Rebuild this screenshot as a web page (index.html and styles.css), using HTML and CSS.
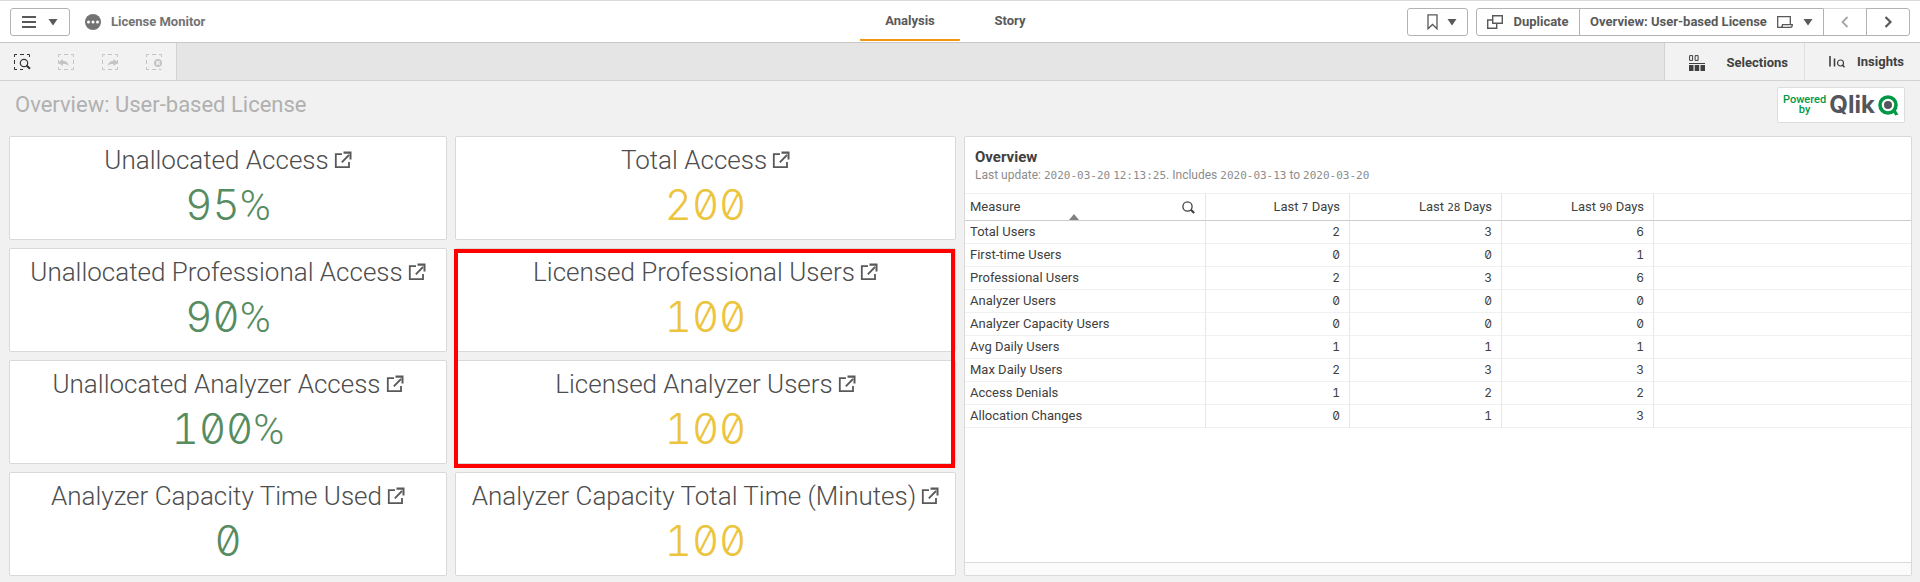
FILE: index.html
```html
<!DOCTYPE html>
<html lang="en">
<head>
<meta charset="utf-8">
<title>License Monitor</title>
<link rel="stylesheet" href="styles.css">
</head>
<body>
<svg class="defs" aria-hidden="true">
  <symbol id="external" viewBox="0 0 18 18"><path d="M8 3.2H1.8v13H15V11M7.800 11.400 15 4" fill="none" stroke="currentColor" stroke-width="1.8"/><path d="M9.500 0.500H17.500V8.500H15.500V2.700H9.500z" fill="currentColor"/></symbol>
  <symbol id="frame" viewBox="0 0 16 16"><path d="M.5 3V.5H3M6 .5h4M13 .5h2.500V3M.5 6v4M.5 13v2.500H3M6 15.500h4M13 15.500h2.500V13M15.500 6v4" fill="none" stroke="currentColor"/></symbol>
  <symbol id="caret" viewBox="0 0 10 8"><path d="M.5 1h9L5 7.500z" fill="currentColor"/></symbol>
</svg>

<header class="topbar">
  <div class="topbar-left">
    <button class="btn menu-btn" type="button" aria-label="Menu">
      <svg width="14" height="12" viewBox="0 0 14 12"><path d="M0 1h14M0 6h14M0 11h14" stroke="currentColor" stroke-width="2"/></svg>
      <svg width="10" height="8"><use href="#caret"/></svg>
    </button>
    <svg class="app-icon" width="16" height="16" viewBox="0 0 16 16"><circle cx="8" cy="8" r="8" fill="#737373"/><g fill="#fff"><circle cx="3.500" cy="8" r="1.500"/><circle cx="8" cy="8" r="1.500"/><circle cx="12.500" cy="8" r="1.500"/></g></svg>
    <span class="app-name">License Monitor</span>
  </div>
  <nav class="tabs">
    <a class="tab tab-active" href="#analysis">Analysis</a>
    <a class="tab" href="#story">Story</a>
  </nav>
  <div class="topbar-right">
    <button class="btn bookmark-btn" type="button" aria-label="Bookmarks">
      <svg width="11" height="16" viewBox="0 0 11 16"><path d="M1 .8h9v14L5.500 10.500 1 14.800z" fill="none" stroke="currentColor" stroke-width="1.300"/></svg>
      <svg width="10" height="8"><use href="#caret"/></svg>
    </button>
    <div class="btn-group">
      <button class="btn duplicate-btn" type="button">
        <svg width="16" height="14" viewBox="0 0 16 14"><path d="M5.700.7h9.600v7.600H5.700zM5.700 5H.7v8.300h9V8.300" fill="none" stroke="currentColor" stroke-width="1.400"/></svg>
        Duplicate
      </button>
      <button class="btn sheet-btn" type="button">
        Overview: User-based License
        <svg width="16" height="12" viewBox="0 0 16 12"><path d="M13.300 8.500V.7H.7v10.600h12.600c1.200 0 2-1 2-2.600H5.500c0 1.600-.8 2.600-2.200 2.600" fill="none" stroke="currentColor" stroke-width="1.300"/></svg>
        <svg width="10" height="8"><use href="#caret"/></svg>
      </button>
      <button class="btn step-btn step-off" type="button" aria-label="Previous sheet"><svg width="8" height="12" viewBox="0 0 8 12"><path d="M6.500 1 1.500 6l5 5" fill="none" stroke="currentColor" stroke-width="1.800"/></svg></button>
      <button class="btn step-btn" type="button" aria-label="Next sheet"><svg width="8" height="12" viewBox="0 0 8 12"><path d="m1.500 1 5 5-5 5" fill="none" stroke="currentColor" stroke-width="2.200"/></svg></button>
    </div>
  </div>
</header>

<div class="selections">
  <div class="tools">
    <button class="tool tool-on" type="button" aria-label="Smart search"><svg width="17" height="16" viewBox="0 0 17 16"><path d="M.5 3V.5H3M6 .5h4M13 .5h2.500V3M.5 6v4M.5 13v2.500H3M6 15.500h3" fill="none" stroke="currentColor"/><circle cx="10" cy="9" r="3.700" fill="none" stroke="currentColor" stroke-width="1.200"/><path d="m12.500 11.500 3.500 3.300" stroke="currentColor" stroke-width="2"/></svg></button>
    <button class="tool" type="button" aria-label="Step back"><svg width="17" height="16" viewBox="0 0 17 16"><use href="#frame" width="16" height="16"/><path d="M0 8.500 5 5v2c3.500 0 5.200 1.500 5.500 5C9.200 10.300 8 10 5 10v2z" fill="currentColor"/></svg></button>
    <button class="tool" type="button" aria-label="Step forward"><svg width="17" height="16" viewBox="0 0 17 16"><use href="#frame" width="16" height="16"/><path d="M16.500 8.500 11.500 5v2C8 7 6.300 8.500 6 12c1.300-1.700 2.500-2 5.500-2v2z" fill="currentColor"/></svg></button>
    <button class="tool" type="button" aria-label="Clear all selections"><svg width="17" height="16" viewBox="0 0 17 16"><path d="M.5 3V.5H3M6 .5h4M13 .5h2.500V3M.5 6v4M.5 13v2.500H3M6 15.500h4M13 15.500h2.500" fill="none" stroke="currentColor"/><circle cx="12" cy="9" r="4" fill="currentColor"/><path d="m10.300 7.300 3.400 3.400M13.700 7.300l-3.400 3.400" stroke="#f2f2f2" stroke-width="1.500"/></svg></button>
  </div>
  <div class="panels">
    <button class="panel-btn selections-btn" type="button">
      <svg width="16" height="16" viewBox="0 0 16 16"><path d="M.6.600h3v4.800h-3zM6.100.600h3v4.800h-3z" fill="none" stroke="currentColor"/><path d="M0 8h16v1H0zM0 10h4.500v6H0zM5.700 10h4.500v6H5.700zM11.500 10H16v6h-4.500z" fill="currentColor"/></svg>
      Selections
    </button>
    <button class="panel-btn insights-btn" type="button">
      <svg width="16" height="12" viewBox="0 0 16 12"><path d="M1 0v10.500M5.500 2.500v8" stroke="currentColor" stroke-width="1.600"/><circle cx="11.500" cy="7" r="3" fill="none" stroke="currentColor" stroke-width="1.200"/><path d="m13.500 9 2 2.300" stroke="currentColor" stroke-width="1.600"/></svg>
      Insights
    </button>
  </div>
</div>

<main class="sheet">
  <div class="sheet-head">
    <h1 class="sheet-title">Overview: User-based License</h1>
    <a class="powered" href="#qlik">
      <span class="powered-text">Powered<br>by</span>
      <span class="wordmark">Qlik</span>
      <svg width="21" height="21" viewBox="0 0 21 21"><circle cx="10" cy="10" r="8" fill="none" stroke="#009845" stroke-width="3.600"/><circle cx="10" cy="10" r="4" fill="#54565b"/><path d="m14 15.500 2.500-2.500 3.800 6.500-3 1z" fill="#009845"/></svg>
    </a>
  </div>

  <div class="grid">
    <section class="card green"><h2 class="kpi-title"><a href="#a">Unallocated Access<svg><use href="#external"/></svg></a></h2><div class="kpi">95<span class="unit">%</span></div></section>
    <section class="card gold"><h2 class="kpi-title"><a href="#b">Total Access<svg><use href="#external"/></svg></a></h2><div class="kpi">200</div></section>
    <section class="card green"><h2 class="kpi-title"><a href="#c">Unallocated Professional Access<svg><use href="#external"/></svg></a></h2><div class="kpi">90<span class="unit">%</span></div></section>
    <section class="card gold"><h2 class="kpi-title"><a href="#d">Licensed Professional Users<svg><use href="#external"/></svg></a></h2><div class="kpi">100</div></section>
    <section class="card green"><h2 class="kpi-title"><a href="#e">Unallocated Analyzer Access<svg><use href="#external"/></svg></a></h2><div class="kpi">100<span class="unit">%</span></div></section>
    <section class="card gold"><h2 class="kpi-title"><a href="#f">Licensed Analyzer Users<svg><use href="#external"/></svg></a></h2><div class="kpi">100</div></section>
    <section class="card green"><h2 class="kpi-title"><a href="#g">Analyzer Capacity Time Used<svg><use href="#external"/></svg></a></h2><div class="kpi">0</div></section>
    <section class="card gold"><h2 class="kpi-title"><a href="#h">Analyzer Capacity Total Time (Minutes)<svg><use href="#external"/></svg></a></h2><div class="kpi">100</div></section>
    <div class="highlight"></div>

    <section class="card overview">
      <h2 class="overview-title">Overview</h2>
      <p class="overview-sub">Last update: <span class="num">2020-03-20</span> <span class="num">12:13:25</span>. Includes <span class="num">2020-03-13</span> to <span class="num">2020-03-20</span></p>
      <table class="table">
        <colgroup><col class="c-measure"><col class="c-7"><col class="c-28"><col class="c-90"><col></colgroup>
        <thead>
          <tr>
            <th class="measure" scope="col"><div class="measure-head">Measure<button class="search" type="button" aria-label="Search Measure"><svg width="13" height="13" viewBox="0 0 13 13"><circle cx="5.500" cy="5.500" r="4.600" fill="none" stroke="currentColor" stroke-width="1.300"/><path d="m8.800 8.800 3.400 3.200" stroke="currentColor" stroke-width="2.200"/></svg></button></div><span class="sort"></span></th>
            <th scope="col">Last <span class="num">7</span> Days</th>
            <th scope="col">Last <span class="num">28</span> Days</th>
            <th scope="col">Last <span class="num">90</span> Days</th>
            <td></td>
          </tr>
        </thead>
        <tbody>
          <tr><td>Total Users</td><td>2</td><td>3</td><td>6</td><td></td></tr>
          <tr><td>First-time Users</td><td>0</td><td>0</td><td>1</td><td></td></tr>
          <tr><td>Professional Users</td><td>2</td><td>3</td><td>6</td><td></td></tr>
          <tr><td>Analyzer Users</td><td>0</td><td>0</td><td>0</td><td></td></tr>
          <tr><td>Analyzer Capacity Users</td><td>0</td><td>0</td><td>0</td><td></td></tr>
          <tr><td>Avg Daily Users</td><td>1</td><td>1</td><td>1</td><td></td></tr>
          <tr><td>Max Daily Users</td><td>2</td><td>3</td><td>3</td><td></td></tr>
          <tr><td>Access Denials</td><td>1</td><td>2</td><td>2</td><td></td></tr>
          <tr><td>Allocation Changes</td><td>0</td><td>1</td><td>3</td><td></td></tr>
        </tbody>
      </table>
      <div class="table-foot"></div>
    </section>
  </div>
</main>
</body>
</html>
```
FILE: styles.css
```css
* { box-sizing: border-box; }

body {
  margin: 0;
  min-height: 100vh;
  display: flex;
  flex-direction: column;
  background: #f1f1f1;
  color: #404040;
  font-family: Roboto, "Liberation Sans", sans-serif;
  font-size: 13px;
}

h1, h2, p { margin: 0; font-weight: 400; }
a { color: inherit; text-decoration: none; }
button { font: inherit; color: inherit; margin: 0; padding: 0; border: 0; background: none; }
svg { display: block; flex: none; }
.defs { position: absolute; width: 0; height: 0; }

.num { font-family: "DejaVu Sans Mono", monospace; font-size: 11px; line-height: 1; }
.kpi,
.table tbody td + td {
  font-family: Inter, Roboto, sans-serif;
  font-feature-settings: "tnum", "zero";
}

/* Top bar */
.topbar {
  display: grid;
  grid-template-columns: 1fr auto 1fr;
  align-items: center;
  height: 43px;
  padding: 0 10px;
  background: #fff;
  border-top: 1px solid #d9d9de;
  border-bottom: 1px solid #c8c8c8;
  color: #595959;
  font-weight: 700;
}
.topbar-left, .topbar-right { display: flex; align-items: center; }
.topbar-right { justify-content: flex-end; gap: 8px; }
.btn {
  display: flex;
  align-items: center;
  justify-content: center;
  height: 28px;
  background: #fff;
  border: 1px solid #b3b3b3;
  border-radius: 3px;
  white-space: nowrap;
}
.menu-btn { width: 60px; gap: 12px; }
.app-icon { margin: 0 10px 0 15px; }
.app-name { color: #737373; }
.bookmark-btn { width: 61px; gap: 9px; padding-left: 8px; }
.btn-group { display: flex; }
.btn-group .btn { margin-left: -1px; border-radius: 0; }
.btn-group .btn:first-child { margin-left: 0; border-radius: 3px 0 0 3px; }
.btn-group .btn:last-child { border-radius: 0 3px 3px 0; }
.duplicate-btn { width: 104px; gap: 10px; }
.sheet-btn { width: 245px; gap: 10px; }
.step-btn { width: 44px; }
.btn-group .step-off { color: #a6a6a6; border-top-color: #d9d9d9; }

.tabs { display: flex; align-self: stretch; }
.tab {
  width: 100px;
  padding-top: 11px;
  line-height: 18px;
  text-align: center;
  border-bottom: 2px solid transparent;
  margin-bottom: 1px;
}
.tab-active { border-bottom-color: #ef960f; border-radius: 1px; }

/* Selections bar */
.selections {
  display: flex;
  justify-content: space-between;
  height: 38px;
  background: #e5e5e5;
  border-bottom: 1px solid #d2d2d2;
}
.tools {
  display: flex;
  align-items: center;
  gap: 27px;
  padding: 0 13px 0 14px;
  background: #f2f2f2;
  border-right: 1px solid #d2d2d2;
}
.tool { color: #c4c4c4; }
.tool-on { color: #333; }
.panels { display: flex; background: #f2f2f2; border-left: 1px solid #d2d2d2; font-weight: 700; }
.panel-btn { display: flex; align-items: center; }
.selections-btn { gap: 22px; padding: 2px 16px 0 24px; border-right: 1px solid #e0e0e0; }
.insights-btn { gap: 12px; padding: 0 16px 0 24px; }

/* Sheet */
.sheet { flex: 1; display: flex; flex-direction: column; padding: 0 8px 6px 9px; }
.sheet-head {
  display: flex;
  align-items: center;
  justify-content: space-between;
  height: 48px;
  padding: 0 7px 0 6px;
}
.sheet-title { font-size: 22px; line-height: 28px; color: #b0b0b0; }
.powered {
  display: flex;
  align-items: center;
  width: 128px;
  height: 36px;
  padding: 0 5px;
  background: #fff;
  border: 1px solid #ddd;
  border-radius: 2px;
}
.powered-text { color: #009845; font-size: 11px; font-weight: 500; line-height: 10px; text-align: center; }
.wordmark { flex: 1; color: #54565b; font: 700 24px/32px Inter, Roboto, sans-serif; text-align: center; }

.grid {
  position: relative;
  flex: 1;
  display: grid;
  grid-template-columns: 438fr 501fr 948fr;
  grid-template-rows: repeat(4, 1fr);
  gap: 8px;
  margin-top: 7px;
}
.card { background: #fff; border: 1px solid #d9d9d9; border-radius: 2px; min-width: 0; }
.green { grid-column: 1; padding-top: 6px; text-align: center; color: #578b60; }
.gold { grid-column: 2; padding-top: 6px; text-align: center; color: #ecc43d; }
.kpi-title { font-size: 26px; line-height: 34px; font-weight: 300; color: #4d4d4d; white-space: nowrap; }
.kpi-title svg { display: inline-block; width: 18px; height: 18px; margin-left: 5px; color: #595959; }
.kpi { font-size: 42px; line-height: 50px; font-weight: 300; padding-top: 3px; }
.unit { font-family: Roboto, sans-serif; line-height: 1; }

.highlight {
  position: absolute;
  grid-area: 2 / 2 / 4 / 3;
  inset: 1px 1px -4px -1px;
  border: 4px solid #f00;
}

/* Overview table */
.overview { grid-area: 1 / 3 / 5 / 4; display: flex; flex-direction: column; }
.overview-title { padding: 10px 10px 0; font-size: 15px; line-height: 20px; font-weight: 700; }
.overview-sub { padding: 0 10px 10px; font-size: 12px; line-height: 16px; color: #8c8c8c; }
.table {
  width: 100%;
  table-layout: fixed;
  border-collapse: separate;
  border-spacing: 0;
  border-top: 1px solid #f0f0f0;
}
.c-measure { width: 241px; }
.c-7 { width: 144px; }
.c-28, .c-90 { width: 152px; }
.table th, .table td {
  height: 23px;
  padding: 0 9px 0 5px;
  border-right: 1px solid #e6e6e6;
  border-bottom: 1px solid #f0f0f0;
  font-weight: 400;
  line-height: 20px;
  text-align: right;
}
.table td { font-size: 12px; }
.table td:first-child { font-size: 13px; text-align: left; }
.table td:last-child { border-right: 0; }
.table thead th, .table thead td { height: 27px; border-bottom-color: #ccc; }
.table th.measure { position: relative; padding-right: 10px; text-align: left; }
.measure-head { display: flex; align-items: center; justify-content: space-between; }
.sort {
  position: absolute;
  left: 104px;
  bottom: 0;
  border: 5px solid transparent;
  border-top: 0;
  border-bottom: 6px solid #808080;
}
.table-foot { height: 13px; margin-top: auto; background: #fbfbfb; border-top: 1px solid #d9d9d9; }
```
